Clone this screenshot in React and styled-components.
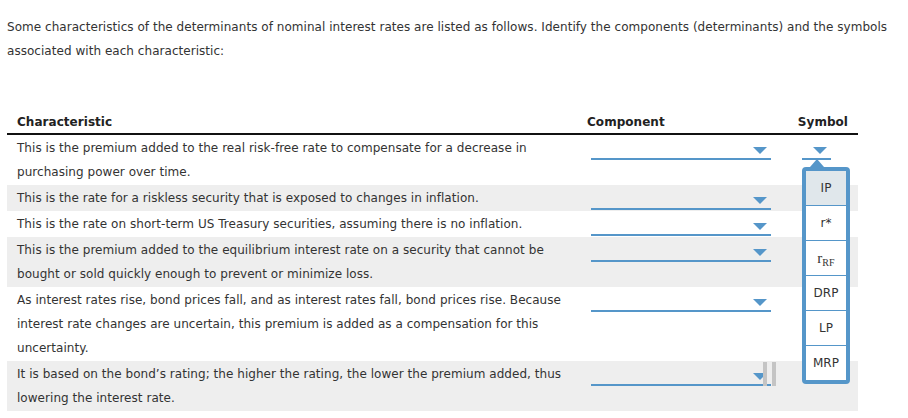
import React from 'react';
import styled, { createGlobalStyle } from 'styled-components';

const GlobalStyle = createGlobalStyle`
  body {
    margin: 0;
    background: #fff;
    color: #333;
    font-family: "DejaVu Sans", Verdana, sans-serif;
    font-size: 12px;
    letter-spacing: 0.04px;
  }
`;

const BLUE = '#5596c9';

const Page = styled.div`
  padding: 15px 7px 0 7px;
`;

const Intro = styled.p`
  margin: 0;
  line-height: 24px;
`;

const Table = styled.div`
  width: 851px;
  margin-top: 47px;
`;

const HeaderRow = styled.div`
  display: grid;
  grid-template-columns: 570px 215px 66px;
  height: 23px;
  border-bottom: 2px solid #111;
`;

const HeadCell = styled.div`
  font-weight: bold;
  color: #222;
  padding-top: 2px;
  line-height: 21px;
  padding-left: ${(p) => (p.$right ? '0' : '10px')};
  padding-right: ${(p) => (p.$right ? '10px' : '0')};
  text-align: ${(p) => (p.$right ? 'right' : 'left')};
`;

const Row = styled.div`
  display: grid;
  grid-template-columns: 570px 215px 66px;
  padding: 1px 0;
  background: ${(p) => (p.$shaded ? '#eeeeee' : '#fff')};
`;

const CharCell = styled.div`
  padding-left: 10px;
  line-height: 24px;
`;

const SelectCell = styled.div`
  padding-left: ${(p) => p.$indent}px;
`;

const Select = styled.div`
  position: relative;
  width: ${(p) => p.$width}px;
  height: 18px;
  border-bottom: 2px solid ${BLUE};
  display: flex;
  justify-content: flex-end;
  align-items: flex-end;
  padding: 0 4px 4px 0;
  box-sizing: content-box;
`;

const Arrow = styled.span`
  width: 0;
  height: 0;
  border-left: 7px solid transparent;
  border-right: 7px solid transparent;
  border-top: 7px solid ${BLUE};
`;

const DragHandle = styled.div`
  position: absolute;
  left: 172px;
  top: 0;
  display: flex;
  gap: 5px;

  span {
    width: 4px;
    height: 24px;
    background: #c4c4c4;
  }
`;

const Popup = styled.ul`
  position: absolute;
  top: 31px;
  left: 0;
  z-index: 2;
  width: 40px;
  margin: 0;
  padding: 0;
  list-style: none;
  border: 4px solid ${BLUE};
  border-radius: 4px;
  background: #fff;

  &::before {
    content: '';
    position: absolute;
    top: -12px;
    left: 4px;
    border-left: 7px solid transparent;
    border-right: 7px solid transparent;
    border-bottom: 8px solid ${BLUE};
  }
`;

const Option = styled.li`
  height: 34px;
  line-height: 34px;
  text-align: center;
  color: #333;
  background: ${(p) => (p.$active ? '#e0e7eb' : '#fff')};
  border-bottom: 1px solid ${BLUE};

  &:last-child {
    border-bottom: none;
  }
`;

const MathSym = styled.span`
  font-family: "Liberation Serif", "Times New Roman", serif;
  font-size: 15px;

  sub {
    font-size: 10px;
    vertical-align: -3px;
  }
`;

const rows = [
  {
    text: 'This is the premium added to the real risk-free rate to compensate for a decrease in purchasing power over time.',
    open: true,
  },
  { text: 'This is the rate for a riskless security that is exposed to changes in inflation.' },
  { text: 'This is the rate on short-term US Treasury securities, assuming there is no inflation.' },
  {
    text: 'This is the premium added to the equilibrium interest rate on a security that cannot be bought or sold quickly enough to prevent or minimize loss.',
  },
  {
    text: 'As interest rates rise, bond prices fall, and as interest rates fall, bond prices rise. Because interest rate changes are uncertain, this premium is added as a compensation for this uncertainty.',
  },
  {
    text: 'It is based on the bond\u2019s rating; the higher the rating, the lower the premium added, thus lowering the interest rate.',
    handle: true,
  },
];

const symbols = [
  'IP',
  'r*',
  <MathSym key="rrf">
    r<sub>RF</sub>
  </MathSym>,
  'DRP',
  'LP',
  'MRP',
];

const App = () => {
  return (
    <>
      <GlobalStyle />
      <Page>
        <Intro>
          Some characteristics of the determinants of nominal interest rates are listed as follows. Identify the
          components (determinants) and the symbols associated with each characteristic:
        </Intro>
        <Table>
          <HeaderRow>
            <HeadCell>Characteristic</HeadCell>
            <HeadCell>Component</HeadCell>
            <HeadCell $right>Symbol</HeadCell>
          </HeaderRow>
          {rows.map((row, i) => (
            <Row key={i} $shaded={i % 2 === 1}>
              <CharCell>{row.text}</CharCell>
              <SelectCell $indent={14}>
                <Select $width={176}>
                  <Arrow />
                  {row.handle && (
                    <DragHandle>
                      <span />
                      <span />
                    </DragHandle>
                  )}
                </Select>
              </SelectCell>
              <SelectCell $indent={10}>
                {row.open && (
                  <Select $width={25}>
                    <Arrow />
                    <Popup>
                      {symbols.map((sym, j) => (
                        <Option key={j} $active={j === 0}>
                          {sym}
                        </Option>
                      ))}
                    </Popup>
                  </Select>
                )}
              </SelectCell>
            </Row>
          ))}
        </Table>
      </Page>
    </>
  );
};

export default App;
